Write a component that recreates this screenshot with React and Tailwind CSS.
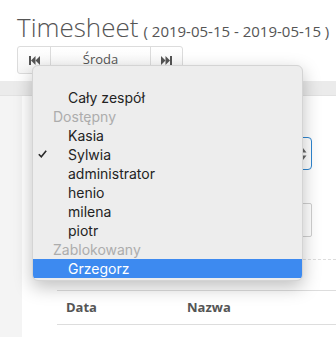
import React from "react";

const groups = [
    { type: "item", label: "Cały zespół" },
    { type: "group", label: "Dostępny" },
    { type: "item", label: "Kasia" },
    { type: "item", label: "Sylwia", checked: true },
    { type: "item", label: "administrator" },
    { type: "item", label: "henio" },
    { type: "item", label: "milena" },
    { type: "item", label: "piotr" },
    { type: "group", label: "Zablokowany" },
    { type: "item", label: "Grzegorz", active: true },
];

function FastBackward() {
    return (
        <svg width="11" height="9" viewBox="0 0 11 9" fill="#555">
            <rect x="0" y="0" width="2" height="9" />
            <polygon points="2,4.5 6.5,0 6.5,9" />
            <polygon points="6.5,4.5 11,0 11,9" />
        </svg>
    );
}

function FastForward() {
    return (
        <svg width="11" height="9" viewBox="0 0 11 9" fill="#555">
            <polygon points="0,0 4.5,4.5 0,9" />
            <polygon points="4.5,0 9,4.5 4.5,9" />
            <rect x="9" y="0" width="2" height="9" />
        </svg>
    );
}

function SelectMenu() {
    return (
        <div className="absolute left-[32px] top-[65px] w-[271px] h-[216px] rounded-[6px] bg-[#ededed] border border-[#d4d4d4] shadow-[0_6px_18px_rgba(0,0,0,0.25)] pt-[22px] pb-[4px] overflow-hidden font-['Inter',sans-serif] text-[14px]">
            {groups.map((g) =>
                g.type === "group" ? (
                    <div key={g.label} className="h-[19px] leading-[19px] pl-[20px] text-[#acacac]">
                        {g.label}
                    </div>
                ) : (
                    <div
                        key={g.label}
                        className={
                            g.active
                                ? "relative h-[19px] leading-[19px] pl-[35px] bg-[#3d8af0] text-white"
                                : "relative h-[19px] leading-[19px] pl-[35px] text-[#232323]"
                        }
                    >
                        {g.checked && (
                            <svg className="absolute left-[5px] top-[5px]" width="9" height="8" viewBox="0 0 9 8">
                                <path d="M0.8 4.2 L3.3 6.8 L8.2 0.8" fill="none" stroke="#2b2b2b" strokeWidth="1.6" />
                            </svg>
                        )}
                        {g.label}
                    </div>
                )
            )}
        </div>
    );
}

export default function App() {
    return (
        <div className="relative w-[336px] h-[337px] overflow-hidden bg-white font-['Open_Sans',sans-serif] text-[#555]">
            <div className="pl-[17px] pt-[12px] h-[81px]">
                <h1 className="flex items-baseline leading-[30px] text-[#555]">
                    <span className="text-[26px] font-light">Timesheet</span>
                    <span className="ml-[5px] text-[15px]">( 2019-05-15 - 2019-05-15 )</span>
                </h1>
                <div className="flex w-[166px] h-[28px] border border-[#dcdcdc] rounded-[3px] bg-gradient-to-b from-white to-[#f6f6f6]">
                    <div className="w-[33px] flex items-center justify-center border-r border-[#dcdcdc]">
                        <FastBackward />
                    </div>
                    <div className="w-[100px] flex items-center justify-center text-[13px] text-[#555] border-r border-[#dcdcdc]">
                        Środa
                    </div>
                    <div className="flex-1 flex items-center justify-center">
                        <FastForward />
                    </div>
                </div>
            </div>
            <div className="h-[15px] bg-[#ebebeb] border-b border-[#e2e2e2]" />
            <div className="flex h-[241px]">
                <div className="w-[22px] bg-[#f4f4f4]" />
                <div className="flex-1 bg-white pl-[35px]">
                    <div className="mt-[41px] mr-[24px] h-[33px] rounded-[4px] border border-[#2f86d0] flex items-center justify-end pr-[4px]">
                        <svg width="8" height="14" viewBox="0 0 8 14" fill="#666">
                            <polygon points="4,1 7.5,5.5 0.5,5.5" />
                            <polygon points="0.5,8.5 7.5,8.5 4,13" />
                        </svg>
                    </div>
                    <div className="mt-[33px] mr-[24px] h-[34px] rounded-[2px] border border-[#d0d0d0]" />
                    <div className="mt-[22px] border-t border-dashed border-[#dddddd]" />
                    <div className="mt-[30px] border-t border-[#dddddd] border-b h-[35px] flex items-center text-[13px] font-bold text-[#555]">
                        <span className="pl-[9px] w-[130px]">Data</span>
                        <span>Nazwa</span>
                    </div>
                </div>
            </div>
            <SelectMenu />
        </div>
    );
}
